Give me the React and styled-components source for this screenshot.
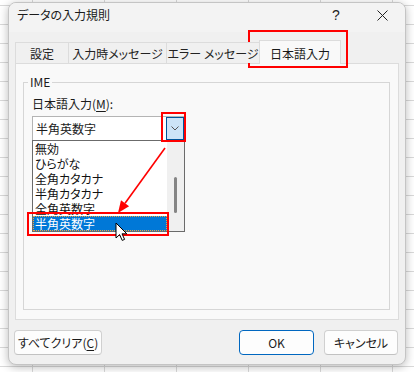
import styled, { createGlobalStyle } from 'styled-components'

const Global = createGlobalStyle`
  html, body {
    margin: 0;
    padding: 0;
  }
  body {
    width: 414px;
    height: 372px;
    overflow: hidden;
    background-color: #ffffff;
    background-image:
      repeating-linear-gradient(90deg, transparent 0 32px, #d9d9d9 32px 33px, transparent 33px 72px),
      repeating-linear-gradient(180deg, transparent 0 5px, #d9d9d9 5px 6px, transparent 6px 19px);
    font-family: "Noto Sans CJK JP", "Noto Sans", sans-serif;
    font-feature-settings: "palt" 1;
    color: #1b1b1b;
  }
`

const Page = styled.div`
  position: relative;
  width: 414px;
  height: 372px;
  padding: 2px 0 0 8px;
  box-sizing: border-box;
`

const Dialog = styled.div`
  width: 398px;
  height: 363px;
  box-sizing: border-box;
  border: 1px solid #c4c4c4;
  border-radius: 8px;
  background: #f0f0f0;
  box-shadow: 0 2px 10px rgba(0, 0, 0, 0.28);
  overflow: hidden;
  display: flex;
  flex-direction: column;
`

const TitleBar = styled.div`
  height: 29px;
  flex: none;
  display: flex;
  align-items: flex-start;
  background: #f3f3f3;
`

const Title = styled.div`
  flex: 1;
  padding: 3px 0 0 8px;
  font-size: 12px;
  line-height: 18px;
`

const CaptionButton = styled.div`
  width: 46px;
  height: 24px;
  display: flex;
  align-items: center;
  justify-content: center;
  font-family: "Liberation Sans", sans-serif;
  font-size: 14px;
  color: #222;
`

const Body = styled.div`
  padding: 0 6px 0 6px;
  display: flex;
  flex-direction: column;
`

const TabRow = styled.div`
  display: flex;
  align-items: flex-end;
  padding-top: 8px;
`

const Tab = styled.div`
  position: relative;
  z-index: ${p => (p.$active ? 2 : 1)};
  width: ${p => p.$w}px;
  height: ${p => (p.$active ? 24 : 21)}px;
  margin-right: -1px;
  margin-bottom: ${p => (p.$active ? -1 : 0)}px;
  box-sizing: border-box;
  border: 1px solid #dcdcdc;
  border-bottom: none;
  background: ${p => (p.$active ? '#f9f9f9' : '#f0f0f0')};
  display: flex;
  align-items: center;
  justify-content: center;
  padding-top: ${p => (p.$active ? 1 : 0)}px;
  font-size: 12px;
  color: ${p => (p.$active ? '#1a1a1a' : '#222')};
  white-space: nowrap;
`

const Panel = styled.div`
  width: 384px;
  height: 257px;
  box-sizing: border-box;
  border: 1px solid #dcdcdc;
  background: #f9f9f9;
  padding: 10px 8px 0 7px;
`

const Group = styled.fieldset`
  margin: 0;
  height: 236px;
  box-sizing: border-box;
  border: 1px solid #d6d6d6;
  padding: 0 4px 0 4px;
  min-width: 0;
`

const Legend = styled.legend`
  padding: 0 2px;
  font-size: 12px;
  line-height: 16px;
  color: #1b1b1b;
`

const GroupContent = styled.div`
  padding: 6px 0 0 4px;
  display: flex;
  flex-direction: column;
  align-items: flex-start;
`

const Label = styled.div`
  font-size: 12px;
  line-height: 16px;
  margin-bottom: 4px;
`

const Key = styled.span`
  text-decoration: underline;
  text-underline-offset: 2px;
`

const Combo = styled.div`
  width: 153px;
  height: 25px;
  box-sizing: border-box;
  border: 1px solid #b4b4b4;
  background: #ffffff;
  display: flex;
  align-items: stretch;
`

const ComboText = styled.div`
  flex: 1;
  padding-left: 3px;
  font-size: 12px;
  line-height: 23px;
`

const DropButton = styled.div`
  width: 18px;
  box-sizing: border-box;
  border: 1px solid #005499;
  background: #cce4f7;
  display: flex;
  align-items: center;
  justify-content: center;
`

const List = styled.div`
  width: 153px;
  height: 92px;
  margin-top: -1px;
  box-sizing: border-box;
  border: 1px solid #6b6b6b;
  background: #ffffff;
  display: flex;
`

const Items = styled.div`
  width: 134px;
  display: flex;
  flex-direction: column;
`

const Item = styled.div`
  height: 15px;
  box-sizing: border-box;
  padding-left: 2px;
  font-size: 12px;
  line-height: 14px;
  white-space: nowrap;
  color: ${p => (p.$selected ? '#ffffff' : '#111')};
  background: ${p => (p.$selected ? '#0078d7' : 'transparent')};
  border: 1px dotted ${p => (p.$selected ? '#f2a33a' : 'transparent')};
  padding-left: 1px;
`

const ScrollTrack = styled.div`
  width: 17px;
  background: #f0f0f0;
  padding: 36px 0 0 7px;
  box-sizing: border-box;
`

const Thumb = styled.div`
  width: 3px;
  height: 36px;
  border-radius: 2px;
  background: #858585;
`

const Footer = styled.div`
  display: flex;
  align-items: center;
  padding: 10px 7px 0 5px;
  gap: 10px;
`

const Button = styled.div`
  width: ${p => p.$w}px;
  height: 25px;
  box-sizing: border-box;
  border: 1px solid ${p => (p.$primary ? '#0067c0' : '#d0d0d0')};
  border-bottom-color: ${p => (p.$primary ? '#0067c0' : '#c2c2c2')};
  border-radius: 4px;
  background: #fdfdfd;
  display: flex;
  align-items: center;
  justify-content: center;
  font-size: 12px;
  color: #1b1b1b;
  ${p => p.$push && 'margin-left: auto;'}
`

const Overlay = styled.svg`
  position: absolute;
  left: 0;
  top: 0;
  width: 414px;
  height: 372px;
  pointer-events: none;
`

const tabs = [
  { label: '設定', w: 54 },
  { label: '入力時メッセージ', w: 99 },
  { label: 'エラー メッセージ', w: 94 },
  { label: '日本語入力', w: 82, active: true },
]

const options = ['無効', 'ひらがな', '全角カタカナ', '半角カタカナ', '全角英数字', '半角英数字']

// arrow geometry, tip near the highlighted row
const tip = [118, 213]
const tail = [165, 148]

export default function App() {
  const dx = tip[0] - tail[0]
  const dy = tip[1] - tail[1]
  const len = Math.hypot(dx, dy)
  const ux = dx / len
  const uy = dy / len
  const bx = tip[0] - ux * 12
  const by = tip[1] - uy * 12
  const head = `${tip[0]},${tip[1]} ${bx + uy * 5},${by - ux * 5} ${bx - uy * 5},${by + ux * 5}`

  return (
    <Page>
      <Global />
      <Dialog>
        <TitleBar>
          <Title>データの入力規則</Title>
          <CaptionButton>?</CaptionButton>
          <CaptionButton>
            <svg width="11" height="11" viewBox="0 0 11 11">
              <path d="M0.5 0.5 L10.5 10.5 M10.5 0.5 L0.5 10.5" stroke="#222" strokeWidth="1" />
            </svg>
          </CaptionButton>
        </TitleBar>
        <Body>
          <TabRow>
            {tabs.map(t => (
              <Tab key={t.label} $w={t.w} $active={t.active}>{t.label}</Tab>
            ))}
          </TabRow>
          <Panel>
            <Group>
              <Legend>IME</Legend>
              <GroupContent>
                <Label>日本語入力(<Key>M</Key>):</Label>
                <Combo>
                  <ComboText>半角英数字</ComboText>
                  <DropButton>
                    <svg width="8" height="5" viewBox="0 0 8 5">
                      <path d="M0.5 0.5 L4 4 L7.5 0.5" fill="none" stroke="#555" strokeWidth="1" />
                    </svg>
                  </DropButton>
                </Combo>
                <List>
                  <Items>
                    {options.map((o, i) => (
                      <Item key={o} $selected={i === options.length - 1}>{o}</Item>
                    ))}
                  </Items>
                  <ScrollTrack>
                    <Thumb />
                  </ScrollTrack>
                </List>
              </GroupContent>
            </Group>
          </Panel>
        </Body>
        <Footer>
          <Button $w={88}>すべてクリア(<Key>C</Key>)</Button>
          <Button $w={75} $primary $push>OK</Button>
          <Button $w={74}>キャンセル</Button>
        </Footer>
      </Dialog>
      <Overlay viewBox="0 0 414 372">
        <rect x="249" y="31" width="98" height="36" fill="none" stroke="#ff0000" strokeWidth="2" />
        <rect x="162" y="113" width="23" height="28" fill="none" stroke="#ff0000" strokeWidth="2" />
        <rect x="28" y="213" width="140" height="22" fill="none" stroke="#ff0000" strokeWidth="2" />
        <line x1={tail[0]} y1={tail[1]} x2={bx} y2={by} stroke="#ff0000" strokeWidth="1.6" />
        <polygon points={head} fill="#ff0000" />
        <g transform="translate(116 223)">
          <path
            d="M0 0 L0 15 L3.6 11.6 L6.2 17.4 L8.6 16.4 L6 10.8 L10.8 10.8 Z"
            fill="#ffffff"
            stroke="#000000"
            strokeWidth="1"
            strokeLinejoin="round"
          />
        </g>
      </Overlay>
    </Page>
  )
}
